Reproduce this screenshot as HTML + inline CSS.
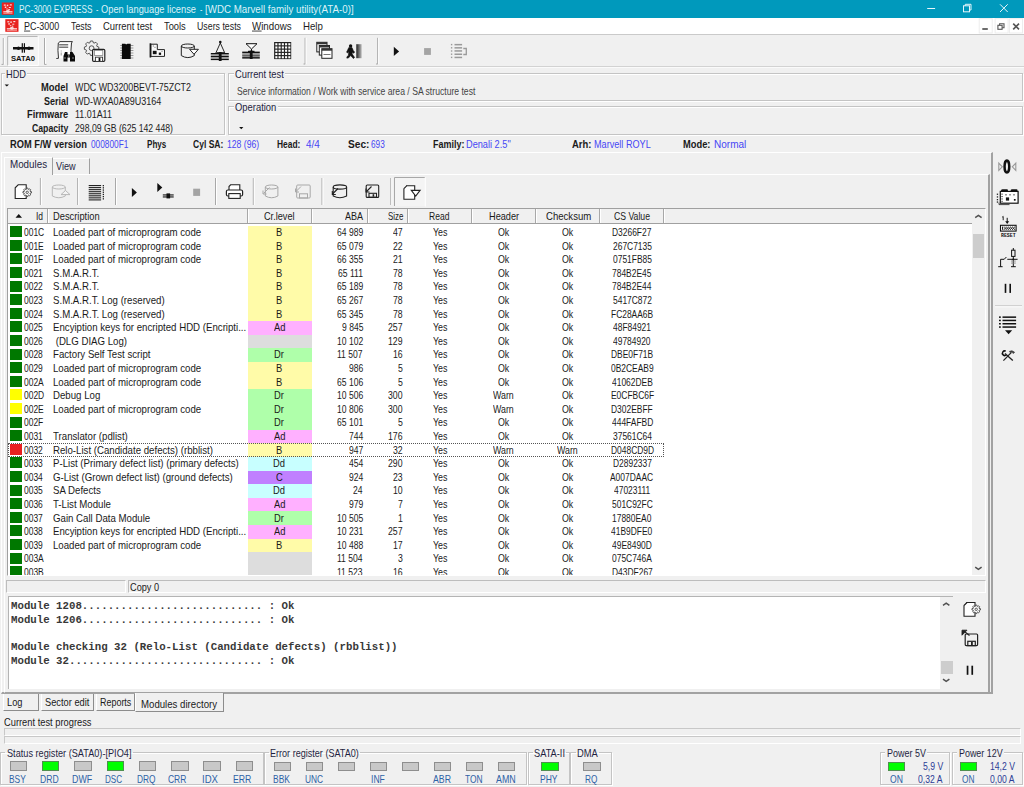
<!DOCTYPE html>
<html><head><meta charset="utf-8">
<style>
*{box-sizing:border-box;margin:0;padding:0}
html,body{width:1024px;height:787px;overflow:hidden;background:#F0F0F0;font-family:"Liberation Sans",sans-serif;color:#000;position:relative}
.a{position:absolute}
.t{position:absolute;white-space:pre;line-height:1;transform-origin:0 0}
.gb{position:absolute;border:1px solid #C4C4C4;box-shadow:inset 1px 1px 0 #fff, 1px 1px 0 #fff}
.gbg{position:absolute;background:#F0F0F0;height:3px}
.ledb{position:absolute;width:17.5px;height:9.5px;background:#C8C8C8;border:1px solid #8E8E8E}
.ledon{background:#00FF00;border-color:#4F8F4F}
svg{position:absolute;overflow:visible}
</style></head><body>
<div class="a" style="left:0;top:0;width:1024px;height:18.3px;background:#0099BC"></div>
<div class="a" style="left:0;top:18px;width:1024px;height:16px;background:#fff"></div>
<div class="a" style="left:0;top:34px;width:1024px;height:1px;background:#CACACA"></div>
<div class="a" style="left:0;top:66px;width:1024px;height:1px;background:#D2D2D2"></div>
<div class="a" style="left:0;top:67px;width:1024px;height:1px;background:#FAFAFA"></div>

<!-- group boxes -->
<div class="gb" style="left:1px;top:72.8px;width:223.6px;height:62px"></div>
<div class="gbg" style="left:5px;top:72px;width:22px"></div>
<div class="gb" style="left:228.3px;top:72.8px;width:794.7px;height:28.1px"></div>
<div class="gbg" style="left:233.5px;top:72px;width:51.5px"></div>
<div class="gb" style="left:228.3px;top:105.9px;width:794.7px;height:28.9px"></div>
<div class="gbg" style="left:233.5px;top:105px;width:44px"></div>

<!-- main panel -->
<div class="a" style="left:1.3px;top:152.2px;width:991.7px;height:542.2px;border-top:1px solid #fff;border-left:1px solid #fff;border-right:2px solid #A2A2A2;border-bottom:2px solid #A2A2A2"></div>
<!-- modules tab content panel -->
<div class="a" style="left:4.3px;top:173.7px;width:985.7px;height:519.6px;border-top:1px solid #fff;border-left:1px solid #fff;border-right:2px solid #A2A2A2;border-bottom:1px solid #A2A2A2"></div>
<div class="a" style="left:4.3px;top:157px;width:48.7px;height:17.6px;background:#F0F0F0;border-top:1px solid #fff;border-left:1px solid #fff;border-right:1.3px solid #A0A0A0"></div>
<div class="a" style="left:52.5px;top:157.8px;width:37px;height:15.9px;border-top:1px solid #fff;border-right:1.3px solid #A0A0A0"></div>

<!-- table -->
<div class="a" style="left:6.5px;top:207.6px;width:979px;height:368.4px;background:#fff;border-top:1.2px solid #A0A0A0;border-left:1.2px solid #A0A0A0;border-bottom:1px solid #fff;border-right:1px solid #fff"></div>
<div class="a" style="left:8px;top:209px;width:963.8px;height:14px;background:#F0F0F0"></div>
<div class="a" style="left:8px;top:222.5px;width:963.8px;height:1px;background:#A0A0A0"></div>
<div class="a" style="left:46.5px;top:209px;width:1px;height:14px;background:#A8A8A8"></div><div class="a" style="left:47.5px;top:209px;width:1px;height:14px;background:#fff"></div>
<div class="a" style="left:246.7px;top:209px;width:1px;height:14px;background:#A8A8A8"></div><div class="a" style="left:247.7px;top:209px;width:1px;height:14px;background:#fff"></div>
<div class="a" style="left:310.9px;top:209px;width:1px;height:14px;background:#A8A8A8"></div><div class="a" style="left:311.9px;top:209px;width:1px;height:14px;background:#fff"></div>
<div class="a" style="left:366.7px;top:209px;width:1px;height:14px;background:#A8A8A8"></div><div class="a" style="left:367.7px;top:209px;width:1px;height:14px;background:#fff"></div>
<div class="a" style="left:406.7px;top:209px;width:1px;height:14px;background:#A8A8A8"></div><div class="a" style="left:407.7px;top:209px;width:1px;height:14px;background:#fff"></div>
<div class="a" style="left:470.5px;top:209px;width:1px;height:14px;background:#A8A8A8"></div><div class="a" style="left:471.5px;top:209px;width:1px;height:14px;background:#fff"></div>
<div class="a" style="left:534.9px;top:209px;width:1px;height:14px;background:#A8A8A8"></div><div class="a" style="left:535.9px;top:209px;width:1px;height:14px;background:#fff"></div>
<div class="a" style="left:598.5px;top:209px;width:1px;height:14px;background:#A8A8A8"></div><div class="a" style="left:599.5px;top:209px;width:1px;height:14px;background:#fff"></div>
<div class="a" style="left:662.5px;top:209px;width:1px;height:14px;background:#A8A8A8"></div><div class="a" style="left:663.5px;top:209px;width:1px;height:14px;background:#fff"></div>
<div class="a" style="left:0;top:0;width:1024px;height:575px;overflow:hidden"><div class="a" style="left:10.3px;top:226.20px;width:11.4px;height:11px;background:#007800"></div><div class="a" style="left:247.8px;top:225.70px;width:64.1px;height:14.1px;background:#FFFBA8"></div>
<div class="a" style="left:10.3px;top:239.80px;width:11.4px;height:11px;background:#007800"></div><div class="a" style="left:247.8px;top:239.30px;width:64.1px;height:14.1px;background:#FFFBA8"></div>
<div class="a" style="left:10.3px;top:253.40px;width:11.4px;height:11px;background:#007800"></div><div class="a" style="left:247.8px;top:252.90px;width:64.1px;height:14.1px;background:#FFFBA8"></div>
<div class="a" style="left:10.3px;top:267.00px;width:11.4px;height:11px;background:#007800"></div><div class="a" style="left:247.8px;top:266.50px;width:64.1px;height:14.1px;background:#FFFBA8"></div>
<div class="a" style="left:10.3px;top:280.60px;width:11.4px;height:11px;background:#007800"></div><div class="a" style="left:247.8px;top:280.10px;width:64.1px;height:14.1px;background:#FFFBA8"></div>
<div class="a" style="left:10.3px;top:294.20px;width:11.4px;height:11px;background:#007800"></div><div class="a" style="left:247.8px;top:293.70px;width:64.1px;height:14.1px;background:#FFFBA8"></div>
<div class="a" style="left:10.3px;top:307.80px;width:11.4px;height:11px;background:#007800"></div><div class="a" style="left:247.8px;top:307.30px;width:64.1px;height:14.1px;background:#FFFBA8"></div>
<div class="a" style="left:10.3px;top:321.40px;width:11.4px;height:11px;background:#007800"></div><div class="a" style="left:247.8px;top:320.90px;width:64.1px;height:14.1px;background:#FFB0FF"></div>
<div class="a" style="left:10.3px;top:335.00px;width:11.4px;height:11px;background:#007800"></div><div class="a" style="left:247.8px;top:334.50px;width:64.1px;height:14.1px;background:#DDDDDD"></div>
<div class="a" style="left:10.3px;top:348.60px;width:11.4px;height:11px;background:#007800"></div><div class="a" style="left:247.8px;top:348.10px;width:64.1px;height:14.1px;background:#AFFFAA"></div>
<div class="a" style="left:10.3px;top:362.20px;width:11.4px;height:11px;background:#007800"></div><div class="a" style="left:247.8px;top:361.70px;width:64.1px;height:14.1px;background:#FFFBA8"></div>
<div class="a" style="left:10.3px;top:375.80px;width:11.4px;height:11px;background:#007800"></div><div class="a" style="left:247.8px;top:375.30px;width:64.1px;height:14.1px;background:#FFFBA8"></div>
<div class="a" style="left:10.3px;top:389.40px;width:11.4px;height:11px;background:#FFFF00"></div><div class="a" style="left:247.8px;top:388.90px;width:64.1px;height:14.1px;background:#AFFFAA"></div>
<div class="a" style="left:10.3px;top:403.00px;width:11.4px;height:11px;background:#FFFF00"></div><div class="a" style="left:247.8px;top:402.50px;width:64.1px;height:14.1px;background:#AFFFAA"></div>
<div class="a" style="left:10.3px;top:416.60px;width:11.4px;height:11px;background:#007800"></div><div class="a" style="left:247.8px;top:416.10px;width:64.1px;height:14.1px;background:#AFFFAA"></div>
<div class="a" style="left:10.3px;top:430.20px;width:11.4px;height:11px;background:#007800"></div><div class="a" style="left:247.8px;top:429.70px;width:64.1px;height:14.1px;background:#FFB0FF"></div>
<div class="a" style="left:10.3px;top:443.80px;width:11.4px;height:11px;background:#E82020"></div><div class="a" style="left:247.8px;top:443.30px;width:64.1px;height:14.1px;background:#FFFBA8"></div>
<div class="a" style="left:10.3px;top:457.40px;width:11.4px;height:11px;background:#007800"></div><div class="a" style="left:247.8px;top:456.90px;width:64.1px;height:14.1px;background:#C8FFFF"></div>
<div class="a" style="left:10.3px;top:471.00px;width:11.4px;height:11px;background:#007800"></div><div class="a" style="left:247.8px;top:470.50px;width:64.1px;height:14.1px;background:#C080FF"></div>
<div class="a" style="left:10.3px;top:484.60px;width:11.4px;height:11px;background:#007800"></div><div class="a" style="left:247.8px;top:484.10px;width:64.1px;height:14.1px;background:#C8FFFF"></div>
<div class="a" style="left:10.3px;top:498.20px;width:11.4px;height:11px;background:#007800"></div><div class="a" style="left:247.8px;top:497.70px;width:64.1px;height:14.1px;background:#FFB0FF"></div>
<div class="a" style="left:10.3px;top:511.80px;width:11.4px;height:11px;background:#007800"></div><div class="a" style="left:247.8px;top:511.30px;width:64.1px;height:14.1px;background:#AFFFAA"></div>
<div class="a" style="left:10.3px;top:525.40px;width:11.4px;height:11px;background:#007800"></div><div class="a" style="left:247.8px;top:524.90px;width:64.1px;height:14.1px;background:#FFB0FF"></div>
<div class="a" style="left:10.3px;top:539.00px;width:11.4px;height:11px;background:#007800"></div><div class="a" style="left:247.8px;top:538.50px;width:64.1px;height:14.1px;background:#FFFBA8"></div>
<div class="a" style="left:10.3px;top:552.60px;width:11.4px;height:11px;background:#007800"></div><div class="a" style="left:247.8px;top:552.10px;width:64.1px;height:14.1px;background:#DDDDDD"></div>
<div class="a" style="left:10.3px;top:566.20px;width:11.4px;height:11px;background:#007800"></div><div class="a" style="left:247.8px;top:565.70px;width:64.1px;height:14.1px;background:#DDDDDD"></div></div>
<div class="a" style="left:8px;top:443.4px;width:655.5px;height:13.4px;border:1px dotted #555"></div>
<div class="a" style="left:971.8px;top:209px;width:13.2px;height:366px;background:#F0F0F0"></div>
<div class="a" style="left:972.5px;top:234.4px;width:11.6px;height:23.2px;background:#CDCDCD"></div>

<!-- status bar -->
<div class="a" style="left:6px;top:580.3px;width:119.5px;height:13.2px;border-top:1px solid #BDBDBD;border-left:1px solid #BDBDBD;border-bottom:1px solid #fff;border-right:1px solid #fff"></div>
<div class="a" style="left:128px;top:580.3px;width:858px;height:13.2px;border-top:1px solid #BDBDBD;border-left:1px solid #BDBDBD;border-bottom:1px solid #fff;border-right:1px solid #fff"></div>

<!-- log -->
<div class="a" style="left:8px;top:595.5px;width:945px;height:93.8px;background:#fff;border-top:1px solid #B4B4B4;border-left:1px solid #B4B4B4"></div>
<div class="a" style="left:940px;top:596.5px;width:13px;height:92.8px;background:#F0F0F0"></div>
<div class="a" style="left:940.5px;top:660.8px;width:12px;height:13.2px;background:#CDCDCD"></div>

<!-- bottom tabs -->
<div class="a" style="left:3px;top:694px;width:36px;height:16.5px;border-left:1px solid #fff;border-right:1.4px solid #8C8C8C;border-bottom:1.4px solid #8C8C8C"></div>
<div class="a" style="left:41px;top:694px;width:52.5px;height:16.5px;border-left:1px solid #fff;border-right:1.4px solid #8C8C8C;border-bottom:1.4px solid #8C8C8C"></div>
<div class="a" style="left:95.5px;top:694px;width:39px;height:16.5px;border-left:1px solid #fff;border-right:1.4px solid #8C8C8C;border-bottom:1.4px solid #8C8C8C"></div>
<div class="a" style="left:135px;top:693px;width:88.5px;height:19px;border-left:1px solid #fff;border-right:1.4px solid #8C8C8C;border-bottom:1.4px solid #8C8C8C;background:#F0F0F0"></div>

<div class="a" style="left:3.5px;top:728px;width:1017px;height:7.8px;border:1px solid #C8C8C8;border-right-color:#fff;border-bottom-color:#fff"></div>
<div class="a" style="left:3.5px;top:735.6px;width:1017px;height:8.2px;border:1px solid #C8C8C8;border-right-color:#fff;border-bottom-color:#fff"></div>

<!-- registers -->
<div class="gb" style="left:0.3px;top:751.6px;width:263.3px;height:33.4px"></div>
<div class="gbg" style="left:5px;top:750px;width:128px"></div>
<div class="gb" style="left:263.6px;top:751.6px;width:263.4px;height:33.4px"></div>
<div class="gbg" style="left:269px;top:750px;width:91px"></div>
<div class="gb" style="left:528.4px;top:751.6px;width:41.2px;height:33.4px"></div>
<div class="gbg" style="left:533px;top:750px;width:33px"></div>
<div class="gb" style="left:570.2px;top:751.6px;width:41.6px;height:33.4px"></div>
<div class="gbg" style="left:576px;top:750px;width:23px"></div>
<div class="gb" style="left:880.4px;top:752.2px;width:70px;height:33.2px"></div>
<div class="gbg" style="left:885px;top:751px;width:42px"></div>
<div class="gb" style="left:952.3px;top:752.2px;width:70.3px;height:33.2px"></div>
<div class="gbg" style="left:957px;top:751px;width:47px"></div>
<div class="ledb" style="left:9.6px;top:761.3px"></div>
<div class="ledb ledon" style="left:41.9px;top:761.3px"></div>
<div class="ledb" style="left:74.2px;top:761.3px"></div>
<div class="ledb ledon" style="left:106.5px;top:761.3px"></div>
<div class="ledb" style="left:138.8px;top:761.3px"></div>
<div class="ledb" style="left:171.1px;top:761.3px"></div>
<div class="ledb" style="left:203.4px;top:761.3px"></div>
<div class="ledb" style="left:235.7px;top:761.3px"></div>
<div class="ledb" style="left:273.6px;top:761.5px"></div>
<div class="ledb" style="left:305.6px;top:761.5px"></div>
<div class="ledb" style="left:337.6px;top:761.5px"></div>
<div class="ledb" style="left:369.6px;top:761.5px"></div>
<div class="ledb" style="left:401.6px;top:761.5px"></div>
<div class="ledb" style="left:433.6px;top:761.5px"></div>
<div class="ledb" style="left:465.6px;top:761.5px"></div>
<div class="ledb" style="left:497.6px;top:761.5px"></div>
<div class="ledb ledon" style="left:541px;top:761.5px"></div>
<div class="ledb" style="left:583px;top:761.5px"></div>
<div class="ledb ledon" style="left:888.2px;top:761.9px;width:17.2px;height:8.8px"></div>
<div class="ledb ledon" style="left:960.2px;top:761.9px;width:17.2px;height:8.8px"></div>
<svg class="a" style="left:0;top:0" width="1024" height="787" viewBox="0 0 1024 787"><rect x="1.8" y="2.5" width="12.2" height="12.3" fill="#E8231F"/>
<g fill="#fff" opacity="0.85"><rect x="3.8" y="4.5" width="2" height="1.2"/><rect x="6.8" y="4.7" width="1.5" height="1.5"/><rect x="9.8" y="4.3" width="2" height="1.2"/><rect x="4.8" y="6.5" width="1.5" height="1.5"/><rect x="8.8" y="7.0" width="2" height="1"/><rect x="6.3" y="8.5" width="1.5" height="1"/><rect x="8.3" y="9.0" width="1.5" height="1"/><rect x="3.3" y="11.200000000000001" width="9.2" height="0.9"/><rect x="3.3" y="12.600000000000001" width="9.2" height="0.9"/><ellipse cx="7.8999999999999995" cy="11.3" rx="2" ry="1.4"/></g>
<rect x="5.3" y="19.2" width="13.2" height="12.6" fill="#E8231F"/>
<g fill="#fff" opacity="0.85"><rect x="7.3" y="21.2" width="2" height="1.2"/><rect x="10.3" y="21.4" width="1.5" height="1.5"/><rect x="13.3" y="21.0" width="2" height="1.2"/><rect x="8.3" y="23.2" width="1.5" height="1.5"/><rect x="12.3" y="23.7" width="2" height="1"/><rect x="9.8" y="25.2" width="1.5" height="1"/><rect x="11.8" y="25.7" width="1.5" height="1"/><rect x="6.8" y="28.199999999999996" width="10.2" height="0.9"/><rect x="6.8" y="29.599999999999998" width="10.2" height="0.9"/><ellipse cx="11.899999999999999" cy="28.299999999999997" rx="2" ry="1.4"/></g>
<rect x="24" y="30.6" width="6.2" height="0.9" fill="#333"/><rect x="252" y="30.6" width="9.6" height="0.9" fill="#333"/>
<g stroke="#E6F6FB" stroke-width="1" fill="none"><line x1="927.2" y1="8.5" x2="935.1" y2="8.5"/><rect x="963.5" y="5.8" width="6" height="6"/><path d="M965.3 5.8 V4.3 H971 V10 H969.5"/><path d="M1000 4.3 L1007.7 12 M1007.7 4.3 L1000 12"/></g>
<rect x="979.2" y="18.7" width="13" height="14.3" fill="#fff" stroke="#EDEDED" stroke-width="1"/>
<rect x="995.1" y="18.7" width="13" height="14.3" fill="#fff" stroke="#EDEDED" stroke-width="1"/>
<rect x="1009.5" y="18.7" width="13" height="14.3" fill="#fff" stroke="#EDEDED" stroke-width="1"/>
<rect x="982.3" y="28.2" width="5.5" height="1.6" fill="#4a4a4a"/>
<g fill="none" stroke="#555" stroke-width="1.1"><rect x="997.9" y="25.3" width="4.2" height="4"/><path d="M999.6 25.3 V23.8 H1004 V27.8 H1002.1"/></g>
<path d="M1013.2 23.6 L1019 29.4 M1019 23.6 L1013.2 29.4" stroke="#555" stroke-width="1.6"/>
<line x1="3.3" y1="38" x2="3.3" y2="64.5" stroke="#A8A8A8" stroke-width="1"/><line x1="4.3" y1="38" x2="4.3" y2="64.5" stroke="#FFFFFF" stroke-width="1"/>
<line x1="1.5" y1="64.4" x2="3.3" y2="64.4" stroke="#A8A8A8" stroke-width="1"/>
<path d="M7.8 65.5 V36.4 H37.6" fill="none" stroke="#A8A8A8" stroke-width="1"/>
<rect x="8.3" y="36.9" width="29.5" height="28.4" fill="#F4F4F4"/>
<path d="M38.3 36.4 V65.6 H7.8" fill="none" stroke="#FFFFFF" stroke-width="1"/>
<g fill="#111"><rect x="13" y="47" width="20.5" height="2.5"/><circle cx="18.5" cy="48.2" r="1.7"/><circle cx="29" cy="48.2" r="1.7"/><rect x="21.7" y="43.2" width="1.2" height="9.5"/><rect x="23.8" y="43.2" width="1.2" height="9.5"/></g>
<text x="11" y="60.8" font-family="Liberation Sans" font-weight="bold" font-size="7.8" fill="#111" textLength="24" lengthAdjust="spacingAndGlyphs">SATA0</text>
<line x1="44.5" y1="38" x2="44.5" y2="64.5" stroke="#A8A8A8" stroke-width="1"/><line x1="45.5" y1="38" x2="45.5" y2="64.5" stroke="#FFFFFF" stroke-width="1"/>
<line x1="44.5" y1="64.4" x2="46.5" y2="64.4" stroke="#A8A8A8" stroke-width="1"/>
<path d="M56.3 58.5 L58.5 58.3 Q57.5 50 58.3 43 L60 41.6 H72.4 L71.5 43 Q70.3 50 71.8 58" fill="#FDFDFD" stroke="#333" stroke-width="1"/>
<rect x="59.2" y="44" width="9" height="1.5" fill="#777"/><rect x="59.2" y="46.5" width="9" height="1.5" fill="#777"/>
<rect x="60.7" y="50.5" width="1" height="1" fill="#999"/><rect x="60.7" y="52.5" width="1" height="3" fill="#999"/>
<g fill="#0a0a0a"><path d="M63.5 61.5 V56 L65 52 H67.5 V61.5 Z"/><path d="M70 61.5 V52 H72.5 L75 56 V61.5 Z"/><rect x="66.5" y="54.5" width="4.5" height="3"/></g>
<g fill="#fff"><rect x="64.5" y="57.5" width="1" height="1"/><rect x="72.5" y="57.5" width="1" height="1"/><rect x="68.3" y="55.5" width="1" height="1"/></g>
<polygon points="96.90,46.39 98.81,47.06 98.81,49.34 96.90,50.01 96.63,50.66 97.51,52.49 95.89,54.11 94.06,53.23 93.41,53.50 92.74,55.41 90.46,55.41 89.79,53.50 89.14,53.23 87.31,54.11 85.69,52.49 86.57,50.66 86.30,50.01 84.39,49.34 84.39,47.06 86.30,46.39 86.57,45.74 85.69,43.91 87.31,42.29 89.14,43.17 89.79,42.90 90.46,40.99 92.74,40.99 93.41,42.90 94.06,43.17 95.89,42.29 97.51,43.91 96.63,45.74" fill="#f0f0f0" stroke="#444" stroke-width="0.9" stroke-linejoin="round"/>
<circle cx="91.6" cy="48.2" r="2.4" fill="#f0f0f0" stroke="#444" stroke-width="0.9"/>
<rect x="92.6" y="49.4" width="12.2" height="12" rx="1.2" fill="#f6f6f6" stroke="#222" stroke-width="1.2"/>
<rect x="94.6" y="50.6" width="8.2" height="4.8" fill="#fff" stroke="#777" stroke-width="0.7"/>
<rect x="95.4" y="57.2" width="7.2" height="4.2" fill="#fff" stroke="#333" stroke-width="0.9"/><rect x="98.6" y="57.8" width="1.8" height="3.2" fill="#111"/>
<g fill="#999"><rect x="120.2" y="45" width="13.2" height="1"/><rect x="120.2" y="47.5" width="13.2" height="1"/><rect x="120.2" y="50" width="13.2" height="1"/><rect x="120.2" y="52.5" width="13.2" height="1"/><rect x="120.2" y="55" width="13.2" height="1"/><rect x="120.2" y="57.5" width="13.2" height="1"/></g>
<path d="M121.9 43.7 H125.3 Q126.3 45 127.3 43.7 H130.7 V59.1 H121.9 Z" fill="#0a0a0a"/>
<rect x="149.6" y="43.3" width="1.6" height="14.2" fill="#111"/>
<path d="M151 44.2 H157.3 V49.6 H164.5 V56.4 H151 Z" fill="#fafafa" stroke="#222" stroke-width="1"/>
<rect x="152.8" y="50.8" width="3.8" height="3.4" fill="#111"/><rect x="158.8" y="52.6" width="2.3" height="2.3" fill="#111"/>
<rect x="152.8" y="45.5" width="1" height="1" fill="#666"/><rect x="154.5" y="46.8" width="1" height="1" fill="#666"/><rect x="161.5" y="50.8" width="1" height="1" fill="#666"/>
<g fill="none" stroke="#222" stroke-width="1"><path d="M181.3 46 V55.6 Q187.8 59.6 194.3 55.6 V46"/><ellipse cx="187.8" cy="46" rx="6.5" ry="2"/></g>
<path d="M189.6 49.3 H198.4 L194 54.3 Z" fill="#fff" stroke="#222" stroke-width="1"/>
<g stroke="#111" stroke-width="0.9" fill="none"><path d="M220.3 43 L215.6 53.5 M220.3 43 L225 53.5"/></g><circle cx="220.3" cy="42" r="1.3" fill="#111"/>
<rect x="210.8" y="53" width="18" height="7" fill="#fff"/>
<g fill="#111"><rect x="210.8" y="53" width="18" height="1.5"/><rect x="210.8" y="56" width="18" height="1.1"/><rect x="210.8" y="58.6" width="18" height="1.5"/></g>
<g fill="#8a8a8a"><rect x="210.8" y="54.6" width="18" height="1.2"/><rect x="210.8" y="57.2" width="18" height="1.2"/></g>
<rect x="218.8" y="52" width="2.8" height="9" fill="#111"/><rect x="216.5" y="52.2" width="7.5" height="1.2" fill="#111"/>
<path d="M246 43.7 H257 L251.5 49 Z" fill="#fff" stroke="#111" stroke-width="1"/><line x1="251.5" y1="49" x2="251.5" y2="51.5" stroke="#111"/>
<rect x="242.2" y="51.6" width="17.6" height="7" fill="#fff"/>
<g fill="#111"><rect x="242.2" y="51.6" width="17.6" height="1.5"/><rect x="242.2" y="54.6" width="17.6" height="1.1"/><rect x="242.2" y="57.1" width="17.6" height="1.5"/></g>
<g fill="#8a8a8a"><rect x="242.2" y="53.2" width="17.6" height="1.2"/><rect x="242.2" y="55.8" width="17.6" height="1.2"/></g>
<rect x="249.8" y="50.6" width="2.8" height="8.4" fill="#111"/><rect x="248" y="50.8" width="6.5" height="1.2" fill="#111"/>
<rect x="274.1" y="42" width="17.1" height="17.1" fill="#222"/>
<rect x="275.30" y="43.20" width="2.1" height="2.1" fill="#fff"/>
<rect x="275.30" y="46.45" width="2.1" height="2.1" fill="#fff"/>
<rect x="275.30" y="49.70" width="2.1" height="2.1" fill="#fff"/>
<rect x="275.30" y="52.95" width="2.1" height="2.1" fill="#fff"/>
<rect x="275.30" y="56.20" width="2.1" height="2.1" fill="#fff"/>
<rect x="278.55" y="43.20" width="2.1" height="2.1" fill="#fff"/>
<rect x="278.55" y="46.45" width="2.1" height="2.1" fill="#fff"/>
<rect x="278.55" y="49.70" width="2.1" height="2.1" fill="#fff"/>
<rect x="278.55" y="52.95" width="2.1" height="2.1" fill="#fff"/>
<rect x="278.55" y="56.20" width="2.1" height="2.1" fill="#fff"/>
<rect x="281.80" y="43.20" width="2.1" height="2.1" fill="#fff"/>
<rect x="281.80" y="46.45" width="2.1" height="2.1" fill="#fff"/>
<rect x="281.80" y="49.70" width="2.1" height="2.1" fill="#fff"/>
<rect x="281.80" y="52.95" width="2.1" height="2.1" fill="#fff"/>
<rect x="281.80" y="56.20" width="2.1" height="2.1" fill="#fff"/>
<rect x="285.05" y="43.20" width="2.1" height="2.1" fill="#fff"/>
<rect x="285.05" y="46.45" width="2.1" height="2.1" fill="#fff"/>
<rect x="285.05" y="49.70" width="2.1" height="2.1" fill="#fff"/>
<rect x="285.05" y="52.95" width="2.1" height="2.1" fill="#fff"/>
<rect x="285.05" y="56.20" width="2.1" height="2.1" fill="#fff"/>
<rect x="288.30" y="43.20" width="2.1" height="2.1" fill="#fff"/>
<rect x="288.30" y="46.45" width="2.1" height="2.1" fill="#fff"/>
<rect x="288.30" y="49.70" width="2.1" height="2.1" fill="#fff"/>
<rect x="288.30" y="52.95" width="2.1" height="2.1" fill="#fff"/>
<rect x="288.30" y="56.20" width="2.1" height="2.1" fill="#fff"/>
<line x1="305.1" y1="37.8" x2="305.1" y2="64.1" stroke="#A8A8A8" stroke-width="1"/><line x1="306.1" y1="37.8" x2="306.1" y2="64.1" stroke="#FFFFFF" stroke-width="1"/>
<line x1="303.5" y1="64" x2="305.1" y2="64" stroke="#A8A8A8" stroke-width="1"/>
<rect x="316.8" y="42.3" width="10.2" height="9.6" fill="#fff" stroke="#222" stroke-width="1"/><rect x="316.8" y="42.3" width="10.2" height="2" fill="#333"/>
<rect x="319.3" y="45.5" width="10.2" height="9.6" fill="#fff" stroke="#222" stroke-width="1"/><rect x="319.3" y="45.5" width="10.2" height="2" fill="#333"/>
<rect x="321.8" y="48.699999999999996" width="10.2" height="9.6" fill="#fff" stroke="#222" stroke-width="1"/><rect x="321.8" y="48.699999999999996" width="10.2" height="2" fill="#333"/>
<rect x="323.5" y="54" width="7" height="1" fill="#777"/>
<circle cx="350.6" cy="45.9" r="1.7" fill="#111"/>
<path d="M348.8 47.6 L352 47.6 L353.4 50.8 L354.6 52 L353.8 53.2 L352.2 52.2 L352.2 54 L354.6 57.4 L353.4 58.6 L350.6 55.4 L349 57.6 L346.9 58.2 L346.9 56.8 L348.4 55.4 L348.8 51.6 L347.6 53 L346.6 52.2 Z" fill="#111" stroke="#111" stroke-width="0.6" stroke-linejoin="round"/>
<defs><linearGradient id="dg" x1="0" x2="1"><stop offset="0" stop-color="#222"/><stop offset="1" stop-color="#bbb"/></linearGradient></defs>
<rect x="356.3" y="44.2" width="5.4" height="14" fill="url(#dg)"/>
<line x1="377.7" y1="37.8" x2="377.7" y2="64.1" stroke="#A8A8A8" stroke-width="1"/><line x1="378.7" y1="37.8" x2="378.7" y2="64.1" stroke="#FFFFFF" stroke-width="1"/>
<line x1="376" y1="64" x2="377.7" y2="64" stroke="#A8A8A8" stroke-width="1"/>
<path d="M393.8 46.8 L399.1 51.4 L393.8 56 Z" fill="#111"/>
<rect x="424.1" y="48.1" width="6.8" height="6.8" fill="#A4A4A4"/>
<rect x="450.9" y="43.9" width="1.4" height="1.4" fill="#9a9a9a"/><rect x="454.5" y="43.9" width="7.6" height="1.5" fill="#9a9a9a"/>
<rect x="450.9" y="47.1" width="1.4" height="1.4" fill="#9a9a9a"/><rect x="454.5" y="47.1" width="7.6" height="1.5" fill="#9a9a9a"/>
<rect x="450.9" y="50.3" width="1.4" height="1.4" fill="#9a9a9a"/><rect x="454.5" y="50.2" width="7.6" height="1.5" fill="#9a9a9a"/>
<rect x="450.9" y="53.5" width="1.4" height="1.4" fill="#9a9a9a"/><rect x="454.5" y="53.5" width="7.6" height="1.5" fill="#9a9a9a"/>
<rect x="450.9" y="56.7" width="1.4" height="1.4" fill="#9a9a9a"/><rect x="454.5" y="56.7" width="7.6" height="1.5" fill="#9a9a9a"/>
<path d="M463.3 48.5 H466.3 V54.5 H463.3" fill="none" stroke="#9a9a9a" stroke-width="1.3"/>
<path d="M4.6 84.5 H9 L6.8 86.6 Z" fill="#111"/>
<path d="M239.1 127 H243.4 L241.25 129.2 Z" fill="#111"/>
<line x1="40.4" y1="178" x2="40.4" y2="205" stroke="#A8A8A8" stroke-width="1"/><line x1="41.4" y1="178" x2="41.4" y2="205" stroke="#fff" stroke-width="1"/>
<line x1="77.7" y1="178" x2="77.7" y2="205" stroke="#A8A8A8" stroke-width="1"/><line x1="78.7" y1="178" x2="78.7" y2="205" stroke="#fff" stroke-width="1"/>
<line x1="115.5" y1="178" x2="115.5" y2="205" stroke="#A8A8A8" stroke-width="1"/><line x1="116.5" y1="178" x2="116.5" y2="205" stroke="#fff" stroke-width="1"/>
<line x1="215.5" y1="178" x2="215.5" y2="205" stroke="#A8A8A8" stroke-width="1"/><line x1="216.5" y1="178" x2="216.5" y2="205" stroke="#fff" stroke-width="1"/>
<line x1="253.3" y1="178" x2="253.3" y2="205" stroke="#A8A8A8" stroke-width="1"/><line x1="254.3" y1="178" x2="254.3" y2="205" stroke="#fff" stroke-width="1"/>
<line x1="322" y1="178" x2="322" y2="205" stroke="#A8A8A8" stroke-width="1"/><line x1="323" y1="178" x2="323" y2="205" stroke="#fff" stroke-width="1"/>
<line x1="390.8" y1="178" x2="390.8" y2="205" stroke="#A8A8A8" stroke-width="1"/><line x1="391.8" y1="178" x2="391.8" y2="205" stroke="#fff" stroke-width="1"/>
<path d="M18.2 184.8 H26.2 V198.5 H15.2 V187.8 Z M15.2 187.8 L18.2 184.8" fill="#fff" stroke="#222" stroke-width="1.1"/>
<polygon points="30.04,191.33 31.45,191.63 31.45,192.97 30.04,193.27 29.89,193.62 30.68,194.83 29.73,195.78 28.52,194.99 28.17,195.14 27.87,196.55 26.53,196.55 26.23,195.14 25.88,194.99 24.67,195.78 23.72,194.83 24.51,193.62 24.36,193.27 22.95,192.97 22.95,191.63 24.36,191.33 24.51,190.98 23.72,189.77 24.67,188.82 25.88,189.61 26.23,189.46 26.53,188.05 27.87,188.05 28.17,189.46 28.52,189.61 29.73,188.82 30.68,189.77 29.89,190.98" fill="#fff" stroke="#444" stroke-width="0.9" stroke-linejoin="round"/>
<circle cx="27.2" cy="192.3" r="1.2" fill="#fff" stroke="#444" stroke-width="0.9"/>
<g fill="none" stroke="#B8B8B8" stroke-width="1"><path d="M52.3 187 V196 Q58.8 199.5 65.3 196 V187"/><ellipse cx="58.8" cy="187" rx="6.5" ry="2"/></g>
<path d="M61 194.6 H70 L65.5 190.5 Z" fill="#f4f4f4" stroke="#B8B8B8" stroke-width="1"/>
<rect x="88.7" y="185.00" width="12.4" height="1.1" fill="#222"/>
<rect x="88.7" y="187.05" width="12.4" height="1.1" fill="#222"/>
<rect x="88.7" y="189.10" width="12.4" height="1.1" fill="#222"/>
<rect x="88.7" y="191.15" width="12.4" height="1.1" fill="#222"/>
<rect x="88.7" y="193.20" width="12.4" height="1.1" fill="#222"/>
<rect x="88.7" y="195.25" width="12.4" height="1.1" fill="#222"/>
<rect x="88.7" y="197.30" width="12.4" height="1.1" fill="#222"/>
<rect x="88.7" y="199.35" width="12.4" height="1.1" fill="#222"/>
<rect x="102.7" y="185.00" width="1.3" height="1.3" fill="#222"/>
<rect x="102.7" y="187.20" width="1.3" height="1.3" fill="#222"/>
<rect x="102.7" y="189.40" width="1.3" height="1.3" fill="#222"/>
<rect x="102.7" y="191.60" width="1.3" height="1.3" fill="#222"/>
<rect x="102.7" y="193.80" width="1.3" height="1.3" fill="#222"/>
<rect x="102.7" y="196.00" width="1.3" height="1.3" fill="#222"/>
<rect x="102.7" y="198.20" width="1.3" height="1.3" fill="#222"/>
<path d="M131.9 188 L136.9 192.45 L131.9 196.9 Z" fill="#111"/>
<path d="M157.3 183 L162.3 187.45 L157.3 191.9 Z" fill="#111"/>
<g fill="#111"><rect x="162.8" y="194.4" width="10.9" height="1.1"/><rect x="162.8" y="196.4" width="10.9" height="1.1"/><rect x="166.5" y="193.4" width="3.6" height="5"/></g>
<rect x="193.2" y="188.7" width="6.9" height="7.2" fill="#A4A4A4"/>
<path d="M229 190 V186.5 L230.6 184.8 H239.8 V190" fill="#fff" stroke="#222" stroke-width="1.1"/>
<rect x="226.4" y="190" width="16.2" height="6" rx="1.5" fill="#fff" stroke="#222" stroke-width="1.2"/>
<rect x="228.8" y="193.6" width="11.4" height="4.8" fill="#fff" stroke="#222" stroke-width="1.1"/>
<g fill="none" stroke="#A8A8A8" stroke-width="1"><path d="M265.3 187 V196 Q271.6 199.5 277.9 196 V187"/><ellipse cx="271.6" cy="187" rx="6.3" ry="2"/><path d="M269.5 187.5 L263.5 193.5 M263 190.5 V194 H266.5"/></g>
<g fill="none" stroke="#A8A8A8" stroke-width="1"><rect x="296.7" y="185" width="13.5" height="13" rx="1"/><rect x="299.5" y="193.8" width="8" height="4.2"/><path d="M301 186.5 L296 191.5 M295.5 188.5 V192 H299"/></g>
<g fill="none" stroke="#222" stroke-width="1.1"><path d="M333.2 187 V196 Q339.8 199.5 346.6 196 V187"/><ellipse cx="339.9" cy="187" rx="6.7" ry="2.1"/><path d="M338 188.5 L332.5 194 M332.3 191 V194.5 H335.8"/></g>
<g fill="none" stroke="#222" stroke-width="1.1"><rect x="366.2" y="185" width="12.5" height="12.4" rx="1"/><rect x="369" y="193.3" width="7.5" height="4"/><path d="M371.5 186.5 L366.5 191.5 M366 188.5 V192 H369.5"/></g>
<rect x="372.6" y="194.2" width="1.6" height="2.5" fill="#222"/>
<path d="M394.5 206 V177.5 H424.8" fill="none" stroke="#A8A8A8" stroke-width="1"/><rect x="395" y="178" width="30" height="28" fill="#F4F4F4"/><path d="M425.3 177.5 V206.5" stroke="#fff" stroke-width="1"/>
<path d="M406.9 185.7 H414.7 V199.29999999999998 H403.9 V188.7 Z M403.9 188.7 L406.9 185.7" fill="#fff" stroke="#222" stroke-width="1.1"/>
<path d="M411.3 190.4 H420.1 L415.7 196 Z" fill="#fff" stroke="#222" stroke-width="1.1"/>
<path d="M15.5 217.7 L18.75 214 L22 217.7 Z" fill="#111"/>
<path d="M975.1999999999999 217.6 L978.4 215.4 L981.6 217.6" fill="none" stroke="#505050" stroke-width="1.5"/>
<path d="M975.1999999999999 567.1999999999999 L978.4 569.4 L981.6 567.1999999999999" fill="none" stroke="#505050" stroke-width="1.5"/>
<path d="M943.0 605.3000000000001 L946.2 603.1 L949.4000000000001 605.3000000000001" fill="none" stroke="#505050" stroke-width="1.5"/>
<path d="M943.0 679.1999999999999 L946.2 681.4 L949.4000000000001 679.1999999999999" fill="none" stroke="#505050" stroke-width="1.5"/>
<path d="M998.8 163.2 L1002.3 166.8 L998.8 170.4 Z" fill="none" stroke="#989898" stroke-width="1.1"/>
<path d="M1015.8 163.2 L1012.3 166.8 L1015.8 170.4 Z" fill="none" stroke="#989898" stroke-width="1.1"/>
<ellipse cx="1006.9" cy="166.6" rx="2.35" ry="6.0" fill="none" stroke="#111" stroke-width="2.5"/>
<rect x="1000.3" y="191.4" width="17.8" height="11.8" fill="#fff" stroke="#111" stroke-width="1.2"/>
<path d="M999 202.6 V204.6 H1009.5" fill="none" stroke="#333" stroke-width="0.9"/>
<path d="M1001.1 191.6 V190 Q1001.5 189.2 1002.5 189.2 H1007 Q1007.9 189.2 1007.9 190 V191.6 Z M1010.7 191.6 V190 Q1011 189.2 1012 189.2 H1016.6 Q1017.5 189.2 1017.5 190 V191.6 Z" fill="#111"/>
<g fill="#222"><rect x="996.8" y="193.6" width="1.3" height="1.3"/><rect x="996.8" y="196.3" width="1.3" height="1.3"/><rect x="996.8" y="199" width="1.3" height="1.3"/><rect x="996.8" y="201.4" width="1.3" height="1.3"/><rect x="1001.5" y="193.6" width="1.1" height="1.1"/><rect x="1001.5" y="196" width="1.1" height="1.1"/><rect x="1001.5" y="198.4" width="1.1" height="1.1"/><rect x="1001.5" y="200.8" width="1.1" height="1.1"/></g>
<g fill="#555"><rect x="1005" y="194.4" width="2" height="0.9"/><rect x="1009" y="194.4" width="2" height="0.9"/><rect x="1013" y="194.4" width="2" height="0.9"/></g>
<rect x="1005.9" y="197.4" width="3.2" height="3.2" fill="#111"/><rect x="1013.9" y="199" width="1.7" height="1.7" fill="#111"/>
<path d="M1002.2 217.2 L1003.2 216.4 V220.2" fill="none" stroke="#111" stroke-width="0.9"/>
<path d="M1007.2 217.8 V222.5" fill="none" stroke="#111" stroke-width="1"/><path d="M1005.2 221.3 H1009.2 L1007.2 224 Z" fill="#111"/>
<rect x="1000.5" y="225.3" width="15.6" height="5.8" fill="#fff" stroke="#111" stroke-width="1.1"/>
<g fill="#222"><rect x="1002" y="226.6" width="1" height="3.2"/><rect x="1003.60" y="226.60" width="1.05" height="1.05"/><rect x="1003.60" y="228.80" width="1.05" height="1.05"/><rect x="1004.65" y="227.70" width="1.05" height="1.05"/><rect x="1004.65" y="227.70" width="1.05" height="1.05"/><rect x="1005.70" y="226.60" width="1.05" height="1.05"/><rect x="1005.70" y="228.80" width="1.05" height="1.05"/><rect x="1006.75" y="227.70" width="1.05" height="1.05"/><rect x="1006.75" y="227.70" width="1.05" height="1.05"/><rect x="1007.80" y="226.60" width="1.05" height="1.05"/><rect x="1007.80" y="228.80" width="1.05" height="1.05"/><rect x="1008.85" y="227.70" width="1.05" height="1.05"/><rect x="1008.85" y="227.70" width="1.05" height="1.05"/><rect x="1009.90" y="226.60" width="1.05" height="1.05"/><rect x="1009.90" y="228.80" width="1.05" height="1.05"/><rect x="1010.95" y="227.70" width="1.05" height="1.05"/><rect x="1010.95" y="227.70" width="1.05" height="1.05"/><rect x="1012.00" y="226.60" width="1.05" height="1.05"/><rect x="1012.00" y="228.80" width="1.05" height="1.05"/><rect x="1013.05" y="227.70" width="1.05" height="1.05"/><rect x="1013.05" y="227.70" width="1.05" height="1.05"/><rect x="1014.10" y="226.60" width="1.05" height="1.05"/><rect x="1014.10" y="228.80" width="1.05" height="1.05"/></g>
<text x="1001" y="237.3" font-family="Liberation Mono" font-size="4.8" font-weight="bold" fill="#111" textLength="14.7" lengthAdjust="spacingAndGlyphs">RESET</text>
<g fill="none" stroke="#111" stroke-width="1"><path d="M998.2 266.7 H1002.6 M1000.6 266.7 V259.3 H1004.2 L1006.4 257"/><rect x="1011.6" y="250.2" width="3.4" height="6.2"/><path d="M1013.3 248 V250.2 M1013.3 256.4 V266.7 M1007.3 259.3 H1017.6 M1011 266.7 H1015.8"/></g>
<g fill="#888"><rect x="1011" y="260.6" width="4.8" height="0.9"/><rect x="1011" y="262.6" width="4.8" height="0.9"/></g><circle cx="1013.3" cy="259.3" r="0.9" fill="#111"/>
<rect x="1004.7" y="283.8" width="1.6" height="9.1" fill="#111"/><rect x="1009.4" y="283.8" width="1.6" height="9.1" fill="#111"/>
<line x1="995" y1="305.8" x2="1022" y2="305.8" stroke="#C4C4C4" stroke-width="1"/><line x1="995" y1="306.8" x2="1022" y2="306.8" stroke="#fff" stroke-width="1"/>
<rect x="999" y="316.4" width="1.8" height="1.5" fill="#111"/><rect x="1002.5" y="316.4" width="13.6" height="1.5" fill="#111"/>
<rect x="999" y="319.7" width="1.8" height="1.5" fill="#111"/><rect x="1002.5" y="319.7" width="13.6" height="1.5" fill="#111"/>
<rect x="999" y="323.0" width="1.8" height="1.5" fill="#111"/><rect x="1002.5" y="323.0" width="13.6" height="1.5" fill="#111"/>
<rect x="999" y="326.3" width="1.8" height="1.5" fill="#111"/><rect x="1002.5" y="326.3" width="13.6" height="1.5" fill="#111"/>
<path d="M1005 330.2 H1012.2 L1008.6 334.2 Z" fill="#111"/>
<g stroke="#222" stroke-width="1.3" fill="none"><path d="M1003.4 360.6 L1011.2 352.6"/><path d="M1005 353.6 L1012.8 360.6"/></g>
<path d="M1005.8 351.2 A2.3 2.3 0 1 0 1006.2 355" fill="none" stroke="#111" stroke-width="1.5"/>
<path d="M1009.4 351.4 Q1012 349.6 1014.6 352.2 L1013.6 353.4 Q1011.6 351.8 1010.2 352.6 Z" fill="#444" stroke="#333" stroke-width="0.6"/>
<path d="M967 602.5 H975 V616.2 H964 V605.5 Z M964 605.5 L967 602.5" fill="#fff" stroke="#222" stroke-width="1.1"/>
<polygon points="979.04,608.33 980.45,608.63 980.45,609.97 979.04,610.27 978.89,610.62 979.68,611.83 978.73,612.78 977.52,611.99 977.17,612.14 976.87,613.55 975.53,613.55 975.23,612.14 974.88,611.99 973.67,612.78 972.72,611.83 973.51,610.62 973.36,610.27 971.95,609.97 971.95,608.63 973.36,608.33 973.51,607.98 972.72,606.77 973.67,605.82 974.88,606.61 975.23,606.46 975.53,605.05 976.87,605.05 977.17,606.46 977.52,606.61 978.73,605.82 979.68,606.77 978.89,607.98" fill="#fff" stroke="#444" stroke-width="0.9" stroke-linejoin="round"/>
<circle cx="976.2" cy="609.3" r="1.2" fill="#fff" stroke="#444" stroke-width="0.9"/>
<g fill="none" stroke="#222" stroke-width="1.2"><rect x="965.2" y="634" width="12.4" height="11.6" rx="1"/><rect x="967.8" y="641.3" width="7.5" height="4.3"/><path d="M969.5 635.5 L963.5 630.8"/></g><rect x="971" y="642" width="1.8" height="3.2" fill="#222"/>
<path d="M962 630.2 L967 630.2 L962 635.2 Z" fill="#222" stroke="#222" stroke-width="0.9"/>
<rect x="966.7" y="665.7" width="1.7" height="9.1" fill="#111"/><rect x="971.4" y="665.7" width="1.7" height="9.1" fill="#111"/></svg>
<div class="t" style="left:18.50px;top:4.12px;font-size:10.8px;color:#DCF2F8;transform:scaleX(0.761)">PC-3000 EXPRESS</div>
<div class="t" style="left:95.80px;top:4.12px;font-size:10.8px;color:#DCF2F8;transform:scaleX(0.650)">-</div>
<div class="t" style="left:100.90px;top:4.12px;font-size:10.8px;color:#DCF2F8;transform:scaleX(0.860)">Open language license</div>
<div class="t" style="left:200.00px;top:4.12px;font-size:10.8px;color:#DCF2F8;transform:scaleX(0.650)">-</div>
<div class="t" style="left:205.40px;top:4.12px;font-size:10.8px;color:#DCF2F8;transform:scaleX(0.903)">[WDC Marvell family utility(ATA-0)]</div>
<div class="t" style="left:23.75px;top:21.19px;font-size:10.6px;color:#1c1c1c;transform:scaleX(0.841)">PC-3000</div>
<div class="t" style="left:70.75px;top:21.19px;font-size:10.6px;color:#1c1c1c;transform:scaleX(0.829)">Tests</div>
<div class="t" style="left:102.50px;top:21.19px;font-size:10.6px;color:#1c1c1c;transform:scaleX(0.889)">Current test</div>
<div class="t" style="left:163.75px;top:21.19px;font-size:10.6px;color:#1c1c1c;transform:scaleX(0.880)">Tools</div>
<div class="t" style="left:196.75px;top:21.19px;font-size:10.6px;color:#1c1c1c;transform:scaleX(0.830)">Users tests</div>
<div class="t" style="left:252.00px;top:21.19px;font-size:10.6px;color:#1c1c1c;transform:scaleX(0.920)">Windows</div>
<div class="t" style="left:302.50px;top:21.19px;font-size:10.6px;color:#1c1c1c;transform:scaleX(0.913)">Help</div>
<div class="t" style="left:6.40px;top:69.65px;font-size:10.3px;color:#1f1f3f;transform:scaleX(0.896)">HDD</div>
<div class="t" style="left:41.30px;top:83.05px;font-size:10.3px;color:#1a1a1a;font-weight:bold;transform:scaleX(0.910)">Model</div>
<div class="t" style="left:74.90px;top:83.05px;font-size:10.3px;color:#222;transform:scaleX(0.862)">WDC WD3200BEVT-75ZCT2</div>
<div class="t" style="left:44.00px;top:96.65px;font-size:10.3px;color:#1a1a1a;font-weight:bold;transform:scaleX(0.869)">Serial</div>
<div class="t" style="left:74.90px;top:96.65px;font-size:10.3px;color:#222;transform:scaleX(0.877)">WD-WXA0A89U3164</div>
<div class="t" style="left:27.00px;top:110.25px;font-size:10.3px;color:#1a1a1a;font-weight:bold;transform:scaleX(0.901)">Firmware</div>
<div class="t" style="left:74.90px;top:110.25px;font-size:10.3px;color:#222;transform:scaleX(0.866)">11.01A11</div>
<div class="t" style="left:32.00px;top:123.75px;font-size:10.3px;color:#1a1a1a;font-weight:bold;transform:scaleX(0.845)">Capacity</div>
<div class="t" style="left:74.90px;top:123.75px;font-size:10.3px;color:#222;transform:scaleX(0.843)">298,09 GB (625 142 448)</div>
<div class="t" style="left:234.80px;top:69.75px;font-size:10.3px;color:#1f1f3f;transform:scaleX(0.907)">Current test</div>
<div class="t" style="left:237.10px;top:86.65px;font-size:10.3px;color:#444;transform:scaleX(0.837)">Service information / Work with service area / SA structure test</div>
<div class="t" style="left:234.80px;top:102.85px;font-size:10.3px;color:#1f1f3f;transform:scaleX(0.914)">Operation</div>
<div class="t" style="left:9.60px;top:140.44px;font-size:10.3px;color:#1a1a1a;font-weight:bold;transform:scaleX(0.903)">ROM F/W version</div>
<div class="t" style="left:90.60px;top:140.44px;font-size:10.3px;color:#4646F5;transform:scaleX(0.806)">000800F1</div>
<div class="t" style="left:193.40px;top:140.44px;font-size:10.3px;color:#1a1a1a;font-weight:bold;transform:scaleX(0.829)">Cyl SA:</div>
<div class="t" style="left:226.60px;top:140.44px;font-size:10.3px;color:#4646F5;transform:scaleX(0.839)">128 (96)</div>
<div class="t" style="left:277.00px;top:140.44px;font-size:10.3px;color:#1a1a1a;font-weight:bold;transform:scaleX(0.816)">Head:</div>
<div class="t" style="left:306.00px;top:140.44px;font-size:10.3px;color:#4646F5;transform:scaleX(0.960)">4/4</div>
<div class="t" style="left:348.00px;top:140.44px;font-size:10.3px;color:#1a1a1a;font-weight:bold;transform:scaleX(0.985)">Sec:</div>
<div class="t" style="left:371.00px;top:140.44px;font-size:10.3px;color:#4646F5;transform:scaleX(0.802)">693</div>
<div class="t" style="left:433.00px;top:140.44px;font-size:10.3px;color:#1a1a1a;font-weight:bold;transform:scaleX(0.870)">Family:</div>
<div class="t" style="left:466.00px;top:140.44px;font-size:10.3px;color:#4646F5;transform:scaleX(0.893)">Denali 2.5"</div>
<div class="t" style="left:572.00px;top:140.44px;font-size:10.3px;color:#1a1a1a;font-weight:bold;transform:scaleX(0.916)">Arh:</div>
<div class="t" style="left:594.00px;top:140.44px;font-size:10.3px;color:#4646F5;transform:scaleX(0.886)">Marvell ROYL</div>
<div class="t" style="left:683.00px;top:140.44px;font-size:10.3px;color:#1a1a1a;font-weight:bold;transform:scaleX(0.904)">Mode:</div>
<div class="t" style="left:714.00px;top:140.44px;font-size:10.3px;color:#4646F5;transform:scaleX(0.973)">Normal</div>
<div class="t" style="left:146.70px;top:140.44px;font-size:10.3px;color:#1a1a1a;font-weight:bold;transform:scaleX(0.784)">Phys</div>
<div class="t" style="left:9.50px;top:160.25px;font-size:10.3px;color:#1f1f3f;transform:scaleX(0.952)">Modules</div>
<div class="t" style="left:55.90px;top:161.54px;font-size:10.3px;color:#1f1f3f;transform:scaleX(0.886)">View</div>
<div class="t" style="left:129.70px;top:582.55px;font-size:10.3px;color:#1a1a1a;transform:scaleX(0.891)">Copy 0</div>
<div class="t" style="left:11.00px;top:601.35px;font-size:10.85px;color:#383838;font-weight:bold;font-family:'Liberation Mono';transform:scaleX(0.990)">Module 1208............................ : Ok</div>
<div class="t" style="left:11.00px;top:614.75px;font-size:10.85px;color:#383838;font-weight:bold;font-family:'Liberation Mono';transform:scaleX(0.990)">Module 1206............................ : Ok</div>
<div class="t" style="left:11.00px;top:641.95px;font-size:10.85px;color:#383838;font-weight:bold;font-family:'Liberation Mono';transform:scaleX(0.990)">Module checking 32 (Relo-List (Candidate defects) (rbblist))</div>
<div class="t" style="left:11.00px;top:655.65px;font-size:10.85px;color:#383838;font-weight:bold;font-family:'Liberation Mono';transform:scaleX(0.990)">Module 32.............................. : Ok</div>
<div class="t" style="left:6.60px;top:698.15px;font-size:10.3px;color:#1a1a1a;transform:scaleX(0.900)">Log</div>
<div class="t" style="left:45.00px;top:698.15px;font-size:10.3px;color:#1a1a1a;transform:scaleX(0.902)">Sector edit</div>
<div class="t" style="left:99.60px;top:698.15px;font-size:10.3px;color:#1a1a1a;transform:scaleX(0.869)">Reports</div>
<div class="t" style="left:140.60px;top:700.05px;font-size:10.3px;color:#1a1a1a;transform:scaleX(0.936)">Modules directory</div>
<div class="t" style="left:3.50px;top:717.65px;font-size:10.3px;color:#1a1a1a;transform:scaleX(0.905)">Current test progress</div>
<div class="t" style="left:6.60px;top:749.15px;font-size:10.3px;color:#1f1f3f;transform:scaleX(0.890)">Status register (SATA0)-[PIO4]</div>
<div class="t" style="left:270.30px;top:749.15px;font-size:10.3px;color:#1f1f3f;transform:scaleX(0.880)">Error register (SATA0)</div>
<div class="t" style="left:534.30px;top:749.15px;font-size:10.3px;color:#1f1f3f;transform:scaleX(0.897)">SATA-II</div>
<div class="t" style="left:577.20px;top:749.15px;font-size:10.3px;color:#1f1f3f;transform:scaleX(0.908)">DMA</div>
<div class="t" style="left:886.70px;top:749.05px;font-size:10.3px;color:#1f1f3f;transform:scaleX(0.871)">Power 5V</div>
<div class="t" style="left:958.50px;top:749.05px;font-size:10.3px;color:#1f1f3f;transform:scaleX(0.867)">Power 12V</div>
<div class="t" style="left:8.90px;top:774.95px;font-size:10.3px;color:#2E62A6;transform:scaleX(0.815)">BSY</div>
<div class="t" style="left:40.30px;top:774.95px;font-size:10.3px;color:#2E62A6;transform:scaleX(0.837)">DRD</div>
<div class="t" style="left:71.50px;top:774.95px;font-size:10.3px;color:#2E62A6;transform:scaleX(0.859)">DWF</div>
<div class="t" style="left:105.00px;top:774.95px;font-size:10.3px;color:#2E62A6;transform:scaleX(0.789)">DSC</div>
<div class="t" style="left:136.60px;top:774.95px;font-size:10.3px;color:#2E62A6;transform:scaleX(0.809)">DRQ</div>
<div class="t" style="left:168.30px;top:774.95px;font-size:10.3px;color:#2E62A6;transform:scaleX(0.823)">CRR</div>
<div class="t" style="left:202.00px;top:774.95px;font-size:10.3px;color:#2E62A6;transform:scaleX(0.925)">IDX</div>
<div class="t" style="left:233.00px;top:774.95px;font-size:10.3px;color:#2E62A6;transform:scaleX(0.845)">ERR</div>
<div class="t" style="left:272.80px;top:774.95px;font-size:10.3px;color:#2E62A6;transform:scaleX(0.820)">BBK</div>
<div class="t" style="left:304.50px;top:774.95px;font-size:10.3px;color:#2E62A6;transform:scaleX(0.809)">UNC</div>
<div class="t" style="left:370.50px;top:774.95px;font-size:10.3px;color:#2E62A6;transform:scaleX(0.835)">INF</div>
<div class="t" style="left:432.70px;top:774.95px;font-size:10.3px;color:#2E62A6;transform:scaleX(0.849)">ABR</div>
<div class="t" style="left:464.90px;top:774.95px;font-size:10.3px;color:#2E62A6;transform:scaleX(0.815)">TON</div>
<div class="t" style="left:495.80px;top:774.95px;font-size:10.3px;color:#2E62A6;transform:scaleX(0.860)">AMN</div>
<div class="t" style="left:540.10px;top:774.95px;font-size:10.3px;color:#2E62A6;transform:scaleX(0.826)">PHY</div>
<div class="t" style="left:585.00px;top:774.95px;font-size:10.3px;color:#2E62A6;transform:scaleX(0.797)">RQ</div>
<div class="t" style="left:922.60px;top:761.95px;font-size:10.3px;color:#2B3C96;transform:scaleX(0.840)">5,9 V</div>
<div class="t" style="left:917.90px;top:775.05px;font-size:10.3px;color:#2B3C96;transform:scaleX(0.836)">0,32 A</div>
<div class="t" style="left:889.80px;top:775.05px;font-size:10.3px;color:#2E62A6;transform:scaleX(0.833)">ON</div>
<div class="t" style="left:989.80px;top:761.95px;font-size:10.3px;color:#2B3C96;transform:scaleX(0.836)">14,2 V</div>
<div class="t" style="left:989.80px;top:775.05px;font-size:10.3px;color:#2B3C96;transform:scaleX(0.836)">0,00 A</div>
<div class="t" style="left:962.10px;top:775.05px;font-size:10.3px;color:#2E62A6;transform:scaleX(0.806)">ON</div>
<div class="t" style="left:36.00px;top:211.94px;font-size:10.3px;color:#1a1a1a;transform:scaleX(0.824)">Id</div>
<div class="t" style="left:53.10px;top:211.94px;font-size:10.3px;color:#1a1a1a;transform:scaleX(0.906)">Description</div>
<div class="t" style="left:264.40px;top:211.94px;font-size:10.3px;color:#1a1a1a;transform:scaleX(0.890)">Cr.level</div>
<div class="t" style="left:345.00px;top:211.94px;font-size:10.3px;color:#1a1a1a;transform:scaleX(0.878)">ABA</div>
<div class="t" style="left:387.50px;top:211.94px;font-size:10.3px;color:#1a1a1a;transform:scaleX(0.768)">Size</div>
<div class="t" style="left:429.40px;top:211.94px;font-size:10.3px;color:#1a1a1a;transform:scaleX(0.828)">Read</div>
<div class="t" style="left:488.75px;top:211.94px;font-size:10.3px;color:#1a1a1a;transform:scaleX(0.892)">Header</div>
<div class="t" style="left:545.90px;top:211.94px;font-size:10.3px;color:#1a1a1a;transform:scaleX(0.930)">Checksum</div>
<div class="t" style="left:613.75px;top:211.94px;font-size:10.3px;color:#1a1a1a;transform:scaleX(0.843)">CS Value</div>
<div class="a" style="left:0;top:0;width:1024px;height:575px;overflow:hidden"><div class="t" style="left:23.80px;top:228.00px;font-size:10.3px;color:#1a1a1a;transform:scaleX(0.822)">001C</div>
<div class="t" style="left:53.30px;top:228.00px;font-size:10.3px;color:#1a1a1a;transform:scaleX(0.938)">Loaded part of microprogram code</div>
<div class="t" style="left:276.42px;top:228.00px;font-size:10.3px;color:#1a1a1a;transform:scaleX(0.909)">B</div>
<div class="t" style="left:336.80px;top:228.00px;font-size:10.3px;color:#1a1a1a;transform:scaleX(0.831)">64 989</div>
<div class="t" style="left:393.30px;top:228.00px;font-size:10.3px;color:#1a1a1a;transform:scaleX(0.844)">47</div>
<div class="t" style="left:432.85px;top:228.00px;font-size:10.3px;color:#1a1a1a;transform:scaleX(0.859)">Yes</div>
<div class="t" style="left:497.80px;top:228.00px;font-size:10.3px;color:#1a1a1a;transform:scaleX(0.857)">Ok</div>
<div class="t" style="left:561.80px;top:228.00px;font-size:10.3px;color:#1a1a1a;transform:scaleX(0.857)">Ok</div>
<div class="t" style="left:612.40px;top:228.00px;font-size:10.3px;color:#1a1a1a;transform:scaleX(0.819)">D3266F27</div>
<div class="t" style="left:23.80px;top:241.60px;font-size:10.3px;color:#1a1a1a;transform:scaleX(0.822)">001E</div>
<div class="t" style="left:53.30px;top:241.60px;font-size:10.3px;color:#1a1a1a;transform:scaleX(0.938)">Loaded part of microprogram code</div>
<div class="t" style="left:276.42px;top:241.60px;font-size:10.3px;color:#1a1a1a;transform:scaleX(0.909)">B</div>
<div class="t" style="left:336.80px;top:241.60px;font-size:10.3px;color:#1a1a1a;transform:scaleX(0.831)">65 079</div>
<div class="t" style="left:393.30px;top:241.60px;font-size:10.3px;color:#1a1a1a;transform:scaleX(0.844)">22</div>
<div class="t" style="left:432.85px;top:241.60px;font-size:10.3px;color:#1a1a1a;transform:scaleX(0.859)">Yes</div>
<div class="t" style="left:497.80px;top:241.60px;font-size:10.3px;color:#1a1a1a;transform:scaleX(0.857)">Ok</div>
<div class="t" style="left:561.80px;top:241.60px;font-size:10.3px;color:#1a1a1a;transform:scaleX(0.857)">Ok</div>
<div class="t" style="left:612.63px;top:241.60px;font-size:10.3px;color:#1a1a1a;transform:scaleX(0.819)">267C7135</div>
<div class="t" style="left:23.80px;top:255.20px;font-size:10.3px;color:#1a1a1a;transform:scaleX(0.822)">001F</div>
<div class="t" style="left:53.30px;top:255.20px;font-size:10.3px;color:#1a1a1a;transform:scaleX(0.938)">Loaded part of microprogram code</div>
<div class="t" style="left:276.42px;top:255.20px;font-size:10.3px;color:#1a1a1a;transform:scaleX(0.909)">B</div>
<div class="t" style="left:336.80px;top:255.20px;font-size:10.3px;color:#1a1a1a;transform:scaleX(0.831)">66 355</div>
<div class="t" style="left:393.30px;top:255.20px;font-size:10.3px;color:#1a1a1a;transform:scaleX(0.844)">21</div>
<div class="t" style="left:432.85px;top:255.20px;font-size:10.3px;color:#1a1a1a;transform:scaleX(0.859)">Yes</div>
<div class="t" style="left:497.80px;top:255.20px;font-size:10.3px;color:#1a1a1a;transform:scaleX(0.857)">Ok</div>
<div class="t" style="left:561.80px;top:255.20px;font-size:10.3px;color:#1a1a1a;transform:scaleX(0.857)">Ok</div>
<div class="t" style="left:612.63px;top:255.20px;font-size:10.3px;color:#1a1a1a;transform:scaleX(0.819)">0751FB85</div>
<div class="t" style="left:23.80px;top:268.81px;font-size:10.3px;color:#1a1a1a;transform:scaleX(0.822)">0021</div>
<div class="t" style="left:53.30px;top:268.81px;font-size:10.3px;color:#1a1a1a;transform:scaleX(0.938)">S.M.A.R.T.</div>
<div class="t" style="left:276.42px;top:268.81px;font-size:10.3px;color:#1a1a1a;transform:scaleX(0.909)">B</div>
<div class="t" style="left:338.07px;top:268.81px;font-size:10.3px;color:#1a1a1a;transform:scaleX(0.831)">65 111</div>
<div class="t" style="left:393.30px;top:268.81px;font-size:10.3px;color:#1a1a1a;transform:scaleX(0.844)">78</div>
<div class="t" style="left:432.85px;top:268.81px;font-size:10.3px;color:#1a1a1a;transform:scaleX(0.859)">Yes</div>
<div class="t" style="left:497.80px;top:268.81px;font-size:10.3px;color:#1a1a1a;transform:scaleX(0.857)">Ok</div>
<div class="t" style="left:561.80px;top:268.81px;font-size:10.3px;color:#1a1a1a;transform:scaleX(0.857)">Ok</div>
<div class="t" style="left:612.40px;top:268.81px;font-size:10.3px;color:#1a1a1a;transform:scaleX(0.819)">784B2E45</div>
<div class="t" style="left:23.80px;top:282.40px;font-size:10.3px;color:#1a1a1a;transform:scaleX(0.822)">0022</div>
<div class="t" style="left:53.30px;top:282.40px;font-size:10.3px;color:#1a1a1a;transform:scaleX(0.938)">S.M.A.R.T.</div>
<div class="t" style="left:276.42px;top:282.40px;font-size:10.3px;color:#1a1a1a;transform:scaleX(0.909)">B</div>
<div class="t" style="left:336.80px;top:282.40px;font-size:10.3px;color:#1a1a1a;transform:scaleX(0.831)">65 189</div>
<div class="t" style="left:393.30px;top:282.40px;font-size:10.3px;color:#1a1a1a;transform:scaleX(0.844)">78</div>
<div class="t" style="left:432.85px;top:282.40px;font-size:10.3px;color:#1a1a1a;transform:scaleX(0.859)">Yes</div>
<div class="t" style="left:497.80px;top:282.40px;font-size:10.3px;color:#1a1a1a;transform:scaleX(0.857)">Ok</div>
<div class="t" style="left:561.80px;top:282.40px;font-size:10.3px;color:#1a1a1a;transform:scaleX(0.857)">Ok</div>
<div class="t" style="left:612.40px;top:282.40px;font-size:10.3px;color:#1a1a1a;transform:scaleX(0.819)">784B2E44</div>
<div class="t" style="left:23.80px;top:296.00px;font-size:10.3px;color:#1a1a1a;transform:scaleX(0.822)">0023</div>
<div class="t" style="left:53.30px;top:296.00px;font-size:10.3px;color:#1a1a1a;transform:scaleX(0.938)">S.M.A.R.T. Log (reserved)</div>
<div class="t" style="left:276.42px;top:296.00px;font-size:10.3px;color:#1a1a1a;transform:scaleX(0.909)">B</div>
<div class="t" style="left:336.80px;top:296.00px;font-size:10.3px;color:#1a1a1a;transform:scaleX(0.831)">65 267</div>
<div class="t" style="left:393.30px;top:296.00px;font-size:10.3px;color:#1a1a1a;transform:scaleX(0.844)">78</div>
<div class="t" style="left:432.85px;top:296.00px;font-size:10.3px;color:#1a1a1a;transform:scaleX(0.859)">Yes</div>
<div class="t" style="left:497.80px;top:296.00px;font-size:10.3px;color:#1a1a1a;transform:scaleX(0.857)">Ok</div>
<div class="t" style="left:561.80px;top:296.00px;font-size:10.3px;color:#1a1a1a;transform:scaleX(0.857)">Ok</div>
<div class="t" style="left:612.63px;top:296.00px;font-size:10.3px;color:#1a1a1a;transform:scaleX(0.819)">5417C872</div>
<div class="t" style="left:23.80px;top:309.60px;font-size:10.3px;color:#1a1a1a;transform:scaleX(0.822)">0024</div>
<div class="t" style="left:53.30px;top:309.60px;font-size:10.3px;color:#1a1a1a;transform:scaleX(0.938)">S.M.A.R.T. Log (reserved)</div>
<div class="t" style="left:276.42px;top:309.60px;font-size:10.3px;color:#1a1a1a;transform:scaleX(0.909)">B</div>
<div class="t" style="left:336.80px;top:309.60px;font-size:10.3px;color:#1a1a1a;transform:scaleX(0.831)">65 345</div>
<div class="t" style="left:393.30px;top:309.60px;font-size:10.3px;color:#1a1a1a;transform:scaleX(0.844)">78</div>
<div class="t" style="left:432.85px;top:309.60px;font-size:10.3px;color:#1a1a1a;transform:scaleX(0.859)">Yes</div>
<div class="t" style="left:497.80px;top:309.60px;font-size:10.3px;color:#1a1a1a;transform:scaleX(0.857)">Ok</div>
<div class="t" style="left:561.80px;top:309.60px;font-size:10.3px;color:#1a1a1a;transform:scaleX(0.857)">Ok</div>
<div class="t" style="left:611.06px;top:309.60px;font-size:10.3px;color:#1a1a1a;transform:scaleX(0.819)">FC28AA6B</div>
<div class="t" style="left:23.80px;top:323.20px;font-size:10.3px;color:#1a1a1a;transform:scaleX(0.822)">0025</div>
<div class="t" style="left:53.30px;top:323.20px;font-size:10.3px;color:#1a1a1a;transform:scaleX(0.938)">Encyiption keys for encripted HDD (Encripti...</div>
<div class="t" style="left:273.75px;top:323.20px;font-size:10.3px;color:#1a1a1a;transform:scaleX(0.909)">Ad</div>
<div class="t" style="left:341.56px;top:323.20px;font-size:10.3px;color:#1a1a1a;transform:scaleX(0.831)">9 845</div>
<div class="t" style="left:388.47px;top:323.20px;font-size:10.3px;color:#1a1a1a;transform:scaleX(0.844)">257</div>
<div class="t" style="left:432.85px;top:323.20px;font-size:10.3px;color:#1a1a1a;transform:scaleX(0.859)">Yes</div>
<div class="t" style="left:497.80px;top:323.20px;font-size:10.3px;color:#1a1a1a;transform:scaleX(0.857)">Ok</div>
<div class="t" style="left:561.80px;top:323.20px;font-size:10.3px;color:#1a1a1a;transform:scaleX(0.857)">Ok</div>
<div class="t" style="left:613.10px;top:323.20px;font-size:10.3px;color:#1a1a1a;transform:scaleX(0.819)">48F84921</div>
<div class="t" style="left:23.80px;top:336.81px;font-size:10.3px;color:#1a1a1a;transform:scaleX(0.822)">0026</div>
<div class="t" style="left:52.92px;top:336.81px;font-size:10.3px;color:#1a1a1a;transform:scaleX(0.938)"> (DLG DIAG Log)</div>
<div class="t" style="left:336.80px;top:336.81px;font-size:10.3px;color:#1a1a1a;transform:scaleX(0.831)">10 102</div>
<div class="t" style="left:388.47px;top:336.81px;font-size:10.3px;color:#1a1a1a;transform:scaleX(0.844)">129</div>
<div class="t" style="left:432.85px;top:336.81px;font-size:10.3px;color:#1a1a1a;transform:scaleX(0.859)">Yes</div>
<div class="t" style="left:497.80px;top:336.81px;font-size:10.3px;color:#1a1a1a;transform:scaleX(0.857)">Ok</div>
<div class="t" style="left:561.80px;top:336.81px;font-size:10.3px;color:#1a1a1a;transform:scaleX(0.857)">Ok</div>
<div class="t" style="left:613.33px;top:336.81px;font-size:10.3px;color:#1a1a1a;transform:scaleX(0.819)">49784920</div>
<div class="t" style="left:23.80px;top:350.40px;font-size:10.3px;color:#1a1a1a;transform:scaleX(0.822)">0028</div>
<div class="t" style="left:53.30px;top:350.40px;font-size:10.3px;color:#1a1a1a;transform:scaleX(0.938)">Factory Self Test script</div>
<div class="t" style="left:274.40px;top:350.40px;font-size:10.3px;color:#1a1a1a;transform:scaleX(0.909)">Dr</div>
<div class="t" style="left:337.44px;top:350.40px;font-size:10.3px;color:#1a1a1a;transform:scaleX(0.831)">11 507</div>
<div class="t" style="left:393.30px;top:350.40px;font-size:10.3px;color:#1a1a1a;transform:scaleX(0.844)">16</div>
<div class="t" style="left:432.85px;top:350.40px;font-size:10.3px;color:#1a1a1a;transform:scaleX(0.859)">Yes</div>
<div class="t" style="left:497.80px;top:350.40px;font-size:10.3px;color:#1a1a1a;transform:scaleX(0.857)">Ok</div>
<div class="t" style="left:561.80px;top:350.40px;font-size:10.3px;color:#1a1a1a;transform:scaleX(0.857)">Ok</div>
<div class="t" style="left:611.06px;top:350.40px;font-size:10.3px;color:#1a1a1a;transform:scaleX(0.819)">DBE0F71B</div>
<div class="t" style="left:23.80px;top:364.00px;font-size:10.3px;color:#1a1a1a;transform:scaleX(0.822)">0029</div>
<div class="t" style="left:53.30px;top:364.00px;font-size:10.3px;color:#1a1a1a;transform:scaleX(0.938)">Loaded part of microprogram code</div>
<div class="t" style="left:276.42px;top:364.00px;font-size:10.3px;color:#1a1a1a;transform:scaleX(0.909)">B</div>
<div class="t" style="left:348.70px;top:364.00px;font-size:10.3px;color:#1a1a1a;transform:scaleX(0.831)">986</div>
<div class="t" style="left:398.13px;top:364.00px;font-size:10.3px;color:#1a1a1a;transform:scaleX(0.844)">5</div>
<div class="t" style="left:432.85px;top:364.00px;font-size:10.3px;color:#1a1a1a;transform:scaleX(0.859)">Yes</div>
<div class="t" style="left:497.80px;top:364.00px;font-size:10.3px;color:#1a1a1a;transform:scaleX(0.857)">Ok</div>
<div class="t" style="left:561.80px;top:364.00px;font-size:10.3px;color:#1a1a1a;transform:scaleX(0.857)">Ok</div>
<div class="t" style="left:610.76px;top:364.00px;font-size:10.3px;color:#1a1a1a;transform:scaleX(0.819)">0B2CEAB9</div>
<div class="t" style="left:23.80px;top:377.60px;font-size:10.3px;color:#1a1a1a;transform:scaleX(0.822)">002A</div>
<div class="t" style="left:53.30px;top:377.60px;font-size:10.3px;color:#1a1a1a;transform:scaleX(0.938)">Loaded part of microprogram code</div>
<div class="t" style="left:276.42px;top:377.60px;font-size:10.3px;color:#1a1a1a;transform:scaleX(0.909)">B</div>
<div class="t" style="left:336.80px;top:377.60px;font-size:10.3px;color:#1a1a1a;transform:scaleX(0.831)">65 106</div>
<div class="t" style="left:398.13px;top:377.60px;font-size:10.3px;color:#1a1a1a;transform:scaleX(0.844)">5</div>
<div class="t" style="left:432.85px;top:377.60px;font-size:10.3px;color:#1a1a1a;transform:scaleX(0.859)">Yes</div>
<div class="t" style="left:497.80px;top:377.60px;font-size:10.3px;color:#1a1a1a;transform:scaleX(0.857)">Ok</div>
<div class="t" style="left:561.80px;top:377.60px;font-size:10.3px;color:#1a1a1a;transform:scaleX(0.857)">Ok</div>
<div class="t" style="left:611.75px;top:377.60px;font-size:10.3px;color:#1a1a1a;transform:scaleX(0.819)">41062DEB</div>
<div class="t" style="left:23.80px;top:391.20px;font-size:10.3px;color:#1a1a1a;transform:scaleX(0.822)">002D</div>
<div class="t" style="left:53.30px;top:391.20px;font-size:10.3px;color:#1a1a1a;transform:scaleX(0.938)">Debug Log</div>
<div class="t" style="left:274.40px;top:391.20px;font-size:10.3px;color:#1a1a1a;transform:scaleX(0.909)">Dr</div>
<div class="t" style="left:336.80px;top:391.20px;font-size:10.3px;color:#1a1a1a;transform:scaleX(0.831)">10 506</div>
<div class="t" style="left:388.47px;top:391.20px;font-size:10.3px;color:#1a1a1a;transform:scaleX(0.844)">300</div>
<div class="t" style="left:432.85px;top:391.20px;font-size:10.3px;color:#1a1a1a;transform:scaleX(0.859)">Yes</div>
<div class="t" style="left:493.30px;top:391.20px;font-size:10.3px;color:#1a1a1a;transform:scaleX(0.857)">Warn</div>
<div class="t" style="left:561.80px;top:391.20px;font-size:10.3px;color:#1a1a1a;transform:scaleX(0.857)">Ok</div>
<div class="t" style="left:610.77px;top:391.20px;font-size:10.3px;color:#1a1a1a;transform:scaleX(0.819)">E0CFBC6F</div>
<div class="t" style="left:23.80px;top:404.81px;font-size:10.3px;color:#1a1a1a;transform:scaleX(0.822)">002E</div>
<div class="t" style="left:53.30px;top:404.81px;font-size:10.3px;color:#1a1a1a;transform:scaleX(0.938)">Loaded part of microprogram code</div>
<div class="t" style="left:274.40px;top:404.81px;font-size:10.3px;color:#1a1a1a;transform:scaleX(0.909)">Dr</div>
<div class="t" style="left:336.80px;top:404.81px;font-size:10.3px;color:#1a1a1a;transform:scaleX(0.831)">10 806</div>
<div class="t" style="left:388.47px;top:404.81px;font-size:10.3px;color:#1a1a1a;transform:scaleX(0.844)">300</div>
<div class="t" style="left:432.85px;top:404.81px;font-size:10.3px;color:#1a1a1a;transform:scaleX(0.859)">Yes</div>
<div class="t" style="left:493.30px;top:404.81px;font-size:10.3px;color:#1a1a1a;transform:scaleX(0.857)">Warn</div>
<div class="t" style="left:561.80px;top:404.81px;font-size:10.3px;color:#1a1a1a;transform:scaleX(0.857)">Ok</div>
<div class="t" style="left:611.47px;top:404.81px;font-size:10.3px;color:#1a1a1a;transform:scaleX(0.819)">D302EBFF</div>
<div class="t" style="left:23.80px;top:418.41px;font-size:10.3px;color:#1a1a1a;transform:scaleX(0.822)">002F</div>
<div class="t" style="left:274.40px;top:418.41px;font-size:10.3px;color:#1a1a1a;transform:scaleX(0.909)">Dr</div>
<div class="t" style="left:336.80px;top:418.41px;font-size:10.3px;color:#1a1a1a;transform:scaleX(0.831)">65 101</div>
<div class="t" style="left:398.13px;top:418.41px;font-size:10.3px;color:#1a1a1a;transform:scaleX(0.844)">5</div>
<div class="t" style="left:432.85px;top:418.41px;font-size:10.3px;color:#1a1a1a;transform:scaleX(0.859)">Yes</div>
<div class="t" style="left:497.80px;top:418.41px;font-size:10.3px;color:#1a1a1a;transform:scaleX(0.857)">Ok</div>
<div class="t" style="left:561.80px;top:418.41px;font-size:10.3px;color:#1a1a1a;transform:scaleX(0.857)">Ok</div>
<div class="t" style="left:611.76px;top:418.41px;font-size:10.3px;color:#1a1a1a;transform:scaleX(0.819)">444FAFBD</div>
<div class="t" style="left:23.80px;top:432.00px;font-size:10.3px;color:#1a1a1a;transform:scaleX(0.822)">0031</div>
<div class="t" style="left:53.30px;top:432.00px;font-size:10.3px;color:#1a1a1a;transform:scaleX(0.938)">Translator (pdlist)</div>
<div class="t" style="left:273.75px;top:432.00px;font-size:10.3px;color:#1a1a1a;transform:scaleX(0.909)">Ad</div>
<div class="t" style="left:348.70px;top:432.00px;font-size:10.3px;color:#1a1a1a;transform:scaleX(0.831)">744</div>
<div class="t" style="left:388.47px;top:432.00px;font-size:10.3px;color:#1a1a1a;transform:scaleX(0.844)">176</div>
<div class="t" style="left:432.85px;top:432.00px;font-size:10.3px;color:#1a1a1a;transform:scaleX(0.859)">Yes</div>
<div class="t" style="left:497.80px;top:432.00px;font-size:10.3px;color:#1a1a1a;transform:scaleX(0.857)">Ok</div>
<div class="t" style="left:561.80px;top:432.00px;font-size:10.3px;color:#1a1a1a;transform:scaleX(0.857)">Ok</div>
<div class="t" style="left:612.63px;top:432.00px;font-size:10.3px;color:#1a1a1a;transform:scaleX(0.819)">37561C64</div>
<div class="t" style="left:23.80px;top:445.60px;font-size:10.3px;color:#1a1a1a;transform:scaleX(0.822)">0032</div>
<div class="t" style="left:53.30px;top:445.60px;font-size:10.3px;color:#1a1a1a;transform:scaleX(0.938)">Relo-List (Candidate defects) (rbblist)</div>
<div class="t" style="left:276.42px;top:445.60px;font-size:10.3px;color:#1a1a1a;transform:scaleX(0.909)">B</div>
<div class="t" style="left:348.70px;top:445.60px;font-size:10.3px;color:#1a1a1a;transform:scaleX(0.831)">947</div>
<div class="t" style="left:393.30px;top:445.60px;font-size:10.3px;color:#1a1a1a;transform:scaleX(0.844)">32</div>
<div class="t" style="left:432.85px;top:445.60px;font-size:10.3px;color:#1a1a1a;transform:scaleX(0.859)">Yes</div>
<div class="t" style="left:493.30px;top:445.60px;font-size:10.3px;color:#1a1a1a;transform:scaleX(0.857)">Warn</div>
<div class="t" style="left:557.30px;top:445.60px;font-size:10.3px;color:#1a1a1a;transform:scaleX(0.857)">Warn</div>
<div class="t" style="left:610.82px;top:445.60px;font-size:10.3px;color:#1a1a1a;transform:scaleX(0.819)">D048CD9D</div>
<div class="t" style="left:23.80px;top:459.20px;font-size:10.3px;color:#1a1a1a;transform:scaleX(0.822)">0033</div>
<div class="t" style="left:53.30px;top:459.20px;font-size:10.3px;color:#1a1a1a;transform:scaleX(0.938)">P-List (Primary defect list) (primary defects)</div>
<div class="t" style="left:273.49px;top:459.20px;font-size:10.3px;color:#1a1a1a;transform:scaleX(0.909)">Dd</div>
<div class="t" style="left:348.70px;top:459.20px;font-size:10.3px;color:#1a1a1a;transform:scaleX(0.831)">454</div>
<div class="t" style="left:388.47px;top:459.20px;font-size:10.3px;color:#1a1a1a;transform:scaleX(0.844)">290</div>
<div class="t" style="left:432.85px;top:459.20px;font-size:10.3px;color:#1a1a1a;transform:scaleX(0.859)">Yes</div>
<div class="t" style="left:497.80px;top:459.20px;font-size:10.3px;color:#1a1a1a;transform:scaleX(0.857)">Ok</div>
<div class="t" style="left:561.80px;top:459.20px;font-size:10.3px;color:#1a1a1a;transform:scaleX(0.857)">Ok</div>
<div class="t" style="left:612.63px;top:459.20px;font-size:10.3px;color:#1a1a1a;transform:scaleX(0.819)">D2892337</div>
<div class="t" style="left:23.80px;top:472.81px;font-size:10.3px;color:#1a1a1a;transform:scaleX(0.822)">0034</div>
<div class="t" style="left:53.30px;top:472.81px;font-size:10.3px;color:#1a1a1a;transform:scaleX(0.938)">G-List (Grown defect list) (ground defects)</div>
<div class="t" style="left:275.96px;top:472.81px;font-size:10.3px;color:#1a1a1a;transform:scaleX(0.909)">C</div>
<div class="t" style="left:348.70px;top:472.81px;font-size:10.3px;color:#1a1a1a;transform:scaleX(0.831)">924</div>
<div class="t" style="left:393.30px;top:472.81px;font-size:10.3px;color:#1a1a1a;transform:scaleX(0.844)">23</div>
<div class="t" style="left:432.85px;top:472.81px;font-size:10.3px;color:#1a1a1a;transform:scaleX(0.859)">Yes</div>
<div class="t" style="left:497.80px;top:472.81px;font-size:10.3px;color:#1a1a1a;transform:scaleX(0.857)">Ok</div>
<div class="t" style="left:561.80px;top:472.81px;font-size:10.3px;color:#1a1a1a;transform:scaleX(0.857)">Ok</div>
<div class="t" style="left:610.41px;top:472.81px;font-size:10.3px;color:#1a1a1a;transform:scaleX(0.819)">A007DAAC</div>
<div class="t" style="left:23.80px;top:486.40px;font-size:10.3px;color:#1a1a1a;transform:scaleX(0.822)">0035</div>
<div class="t" style="left:53.30px;top:486.40px;font-size:10.3px;color:#1a1a1a;transform:scaleX(0.938)">SA Defects</div>
<div class="t" style="left:273.49px;top:486.40px;font-size:10.3px;color:#1a1a1a;transform:scaleX(0.909)">Dd</div>
<div class="t" style="left:353.45px;top:486.40px;font-size:10.3px;color:#1a1a1a;transform:scaleX(0.831)">24</div>
<div class="t" style="left:393.30px;top:486.40px;font-size:10.3px;color:#1a1a1a;transform:scaleX(0.844)">10</div>
<div class="t" style="left:432.85px;top:486.40px;font-size:10.3px;color:#1a1a1a;transform:scaleX(0.859)">Yes</div>
<div class="t" style="left:497.80px;top:486.40px;font-size:10.3px;color:#1a1a1a;transform:scaleX(0.857)">Ok</div>
<div class="t" style="left:561.80px;top:486.40px;font-size:10.3px;color:#1a1a1a;transform:scaleX(0.857)">Ok</div>
<div class="t" style="left:613.96px;top:486.40px;font-size:10.3px;color:#1a1a1a;transform:scaleX(0.819)">47023111</div>
<div class="t" style="left:23.80px;top:500.00px;font-size:10.3px;color:#1a1a1a;transform:scaleX(0.822)">0036</div>
<div class="t" style="left:53.30px;top:500.00px;font-size:10.3px;color:#1a1a1a;transform:scaleX(0.938)">T-List Module</div>
<div class="t" style="left:273.75px;top:500.00px;font-size:10.3px;color:#1a1a1a;transform:scaleX(0.909)">Ad</div>
<div class="t" style="left:348.70px;top:500.00px;font-size:10.3px;color:#1a1a1a;transform:scaleX(0.831)">979</div>
<div class="t" style="left:398.13px;top:500.00px;font-size:10.3px;color:#1a1a1a;transform:scaleX(0.844)">7</div>
<div class="t" style="left:432.85px;top:500.00px;font-size:10.3px;color:#1a1a1a;transform:scaleX(0.859)">Yes</div>
<div class="t" style="left:497.80px;top:500.00px;font-size:10.3px;color:#1a1a1a;transform:scaleX(0.857)">Ok</div>
<div class="t" style="left:561.80px;top:500.00px;font-size:10.3px;color:#1a1a1a;transform:scaleX(0.857)">Ok</div>
<div class="t" style="left:611.58px;top:500.00px;font-size:10.3px;color:#1a1a1a;transform:scaleX(0.819)">501C92FC</div>
<div class="t" style="left:23.80px;top:513.61px;font-size:10.3px;color:#1a1a1a;transform:scaleX(0.822)">0037</div>
<div class="t" style="left:53.30px;top:513.61px;font-size:10.3px;color:#1a1a1a;transform:scaleX(0.938)">Gain Call Data Module</div>
<div class="t" style="left:274.40px;top:513.61px;font-size:10.3px;color:#1a1a1a;transform:scaleX(0.909)">Dr</div>
<div class="t" style="left:336.80px;top:513.61px;font-size:10.3px;color:#1a1a1a;transform:scaleX(0.831)">10 505</div>
<div class="t" style="left:398.13px;top:513.61px;font-size:10.3px;color:#1a1a1a;transform:scaleX(0.844)">1</div>
<div class="t" style="left:432.85px;top:513.61px;font-size:10.3px;color:#1a1a1a;transform:scaleX(0.859)">Yes</div>
<div class="t" style="left:497.80px;top:513.61px;font-size:10.3px;color:#1a1a1a;transform:scaleX(0.857)">Ok</div>
<div class="t" style="left:561.80px;top:513.61px;font-size:10.3px;color:#1a1a1a;transform:scaleX(0.857)">Ok</div>
<div class="t" style="left:612.40px;top:513.61px;font-size:10.3px;color:#1a1a1a;transform:scaleX(0.819)">17880EA0</div>
<div class="t" style="left:23.80px;top:527.21px;font-size:10.3px;color:#1a1a1a;transform:scaleX(0.822)">0038</div>
<div class="t" style="left:53.30px;top:527.21px;font-size:10.3px;color:#1a1a1a;transform:scaleX(0.938)">Encyiption keys for encripted HDD (Encripti...</div>
<div class="t" style="left:273.75px;top:527.21px;font-size:10.3px;color:#1a1a1a;transform:scaleX(0.909)">Ad</div>
<div class="t" style="left:336.80px;top:527.21px;font-size:10.3px;color:#1a1a1a;transform:scaleX(0.831)">10 231</div>
<div class="t" style="left:388.47px;top:527.21px;font-size:10.3px;color:#1a1a1a;transform:scaleX(0.844)">257</div>
<div class="t" style="left:432.85px;top:527.21px;font-size:10.3px;color:#1a1a1a;transform:scaleX(0.859)">Yes</div>
<div class="t" style="left:497.80px;top:527.21px;font-size:10.3px;color:#1a1a1a;transform:scaleX(0.857)">Ok</div>
<div class="t" style="left:561.80px;top:527.21px;font-size:10.3px;color:#1a1a1a;transform:scaleX(0.857)">Ok</div>
<div class="t" style="left:611.47px;top:527.21px;font-size:10.3px;color:#1a1a1a;transform:scaleX(0.819)">41B9DFE0</div>
<div class="t" style="left:23.80px;top:540.81px;font-size:10.3px;color:#1a1a1a;transform:scaleX(0.822)">0039</div>
<div class="t" style="left:53.30px;top:540.81px;font-size:10.3px;color:#1a1a1a;transform:scaleX(0.938)">Loaded part of microprogram code</div>
<div class="t" style="left:276.42px;top:540.81px;font-size:10.3px;color:#1a1a1a;transform:scaleX(0.909)">B</div>
<div class="t" style="left:336.80px;top:540.81px;font-size:10.3px;color:#1a1a1a;transform:scaleX(0.831)">10 488</div>
<div class="t" style="left:393.30px;top:540.81px;font-size:10.3px;color:#1a1a1a;transform:scaleX(0.844)">17</div>
<div class="t" style="left:432.85px;top:540.81px;font-size:10.3px;color:#1a1a1a;transform:scaleX(0.859)">Yes</div>
<div class="t" style="left:497.80px;top:540.81px;font-size:10.3px;color:#1a1a1a;transform:scaleX(0.857)">Ok</div>
<div class="t" style="left:561.80px;top:540.81px;font-size:10.3px;color:#1a1a1a;transform:scaleX(0.857)">Ok</div>
<div class="t" style="left:612.45px;top:540.81px;font-size:10.3px;color:#1a1a1a;transform:scaleX(0.819)">49E8490D</div>
<div class="t" style="left:23.80px;top:554.41px;font-size:10.3px;color:#1a1a1a;transform:scaleX(0.822)">003A</div>
<div class="t" style="left:337.44px;top:554.41px;font-size:10.3px;color:#1a1a1a;transform:scaleX(0.831)">11 504</div>
<div class="t" style="left:398.13px;top:554.41px;font-size:10.3px;color:#1a1a1a;transform:scaleX(0.844)">3</div>
<div class="t" style="left:432.85px;top:554.41px;font-size:10.3px;color:#1a1a1a;transform:scaleX(0.859)">Yes</div>
<div class="t" style="left:497.80px;top:554.41px;font-size:10.3px;color:#1a1a1a;transform:scaleX(0.857)">Ok</div>
<div class="t" style="left:561.80px;top:554.41px;font-size:10.3px;color:#1a1a1a;transform:scaleX(0.857)">Ok</div>
<div class="t" style="left:612.22px;top:554.41px;font-size:10.3px;color:#1a1a1a;transform:scaleX(0.819)">075C746A</div>
<div class="t" style="left:23.80px;top:568.00px;font-size:10.3px;color:#1a1a1a;transform:scaleX(0.822)">003B</div>
<div class="t" style="left:337.44px;top:568.00px;font-size:10.3px;color:#1a1a1a;transform:scaleX(0.831)">11 523</div>
<div class="t" style="left:393.30px;top:568.00px;font-size:10.3px;color:#1a1a1a;transform:scaleX(0.844)">16</div>
<div class="t" style="left:432.85px;top:568.00px;font-size:10.3px;color:#1a1a1a;transform:scaleX(0.859)">Yes</div>
<div class="t" style="left:497.80px;top:568.00px;font-size:10.3px;color:#1a1a1a;transform:scaleX(0.857)">Ok</div>
<div class="t" style="left:561.80px;top:568.00px;font-size:10.3px;color:#1a1a1a;transform:scaleX(0.857)">Ok</div>
<div class="t" style="left:611.70px;top:568.00px;font-size:10.3px;color:#1a1a1a;transform:scaleX(0.819)">D43DF267</div></div>
</body></html>
